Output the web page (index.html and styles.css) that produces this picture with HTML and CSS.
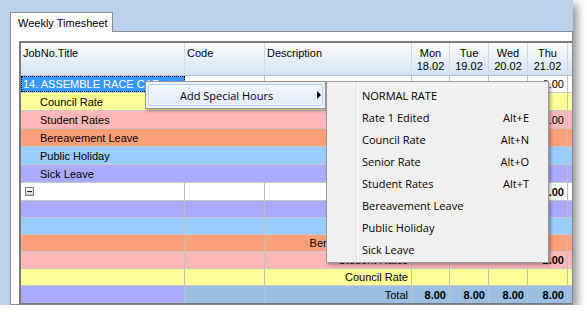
FILE: index.html
```html
<!DOCTYPE html>
<html lang="en">
<head>
  <meta charset="UTF-8" />
  <title>Weekly Timesheet</title>
  <link rel="stylesheet" href="styles.css">
</head>
<body>

  <div class="window">
    <div class="tab">Weekly Timesheet</div>

    <div class="panel">
      <div class="grid">
        <div class="row head">
          <div class="cell">JobNo.Title</div>
          <div class="cell">Code</div>
          <div class="cell">Description</div>
          <div class="cell day">Mon<br>18.02</div>
          <div class="cell day">Tue<br>19.02</div>
          <div class="cell day">Wed<br>20.02</div>
          <div class="cell day">Thu<br>21.02</div>
          <div class="cell"></div>
        </div>

        <div class="row job">
          <div class="cell selected">14. ASSEMBLE RACE CAR</div>
          <div class="cell"></div>
          <div class="cell"></div>
          <div class="cell num"></div>
          <div class="cell num"></div>
          <div class="cell num"></div>
          <div class="cell num">6.00</div>
          <div class="cell"></div>
        </div>

        <div class="row rate yellow">
          <div class="cell label">Council Rate</div>
          <div class="cell num"></div>
          <div class="cell num"></div>
          <div class="cell num"></div>
          <div class="cell num"></div>
          <div class="cell"></div>
        </div>
        <div class="row rate pink">
          <div class="cell label">Student Rates</div>
          <div class="cell num"></div>
          <div class="cell num"></div>
          <div class="cell num"></div>
          <div class="cell num">2.00</div>
          <div class="cell"></div>
        </div>
        <div class="row rate orange">
          <div class="cell label">Bereavement Leave</div>
          <div class="cell num"></div>
          <div class="cell num"></div>
          <div class="cell num"></div>
          <div class="cell num"></div>
          <div class="cell"></div>
        </div>
        <div class="row rate blue">
          <div class="cell label">Public Holiday</div>
          <div class="cell num"></div>
          <div class="cell num"></div>
          <div class="cell num"></div>
          <div class="cell num"></div>
          <div class="cell"></div>
        </div>
        <div class="row rate lavender">
          <div class="cell label">Sick Leave</div>
          <div class="cell num"></div>
          <div class="cell num"></div>
          <div class="cell num"></div>
          <div class="cell num"></div>
          <div class="cell"></div>
        </div>

        <div class="row rate">
          <div class="cell"><span class="collapse"></span></div>
          <div class="cell"></div>
          <div class="cell"></div>
          <div class="cell num"></div>
          <div class="cell num"></div>
          <div class="cell num"></div>
          <div class="cell num bold">8.00</div>
          <div class="cell"></div>
        </div>

        <div class="row sum lavender">
          <div class="cell"></div>
          <div class="cell"></div>
          <div class="cell num"></div>
          <div class="cell num"></div>
          <div class="cell num"></div>
          <div class="cell num"></div>
          <div class="cell num"></div>
          <div class="cell"></div>
        </div>
        <div class="row sum blue">
          <div class="cell"></div>
          <div class="cell"></div>
          <div class="cell num"></div>
          <div class="cell num"></div>
          <div class="cell num"></div>
          <div class="cell num"></div>
          <div class="cell num"></div>
          <div class="cell"></div>
        </div>
        <div class="row sum orange">
          <div class="cell"></div>
          <div class="cell"></div>
          <div class="cell num">Bereavement Leave</div>
          <div class="cell num"></div>
          <div class="cell num"></div>
          <div class="cell num"></div>
          <div class="cell num"></div>
          <div class="cell"></div>
        </div>
        <div class="row sum pink">
          <div class="cell"></div>
          <div class="cell"></div>
          <div class="cell num">Student Rates</div>
          <div class="cell num"></div>
          <div class="cell num"></div>
          <div class="cell num"></div>
          <div class="cell num bold">2.00</div>
          <div class="cell"></div>
        </div>
        <div class="row sum yellow">
          <div class="cell"></div>
          <div class="cell"></div>
          <div class="cell num">Council Rate</div>
          <div class="cell num"></div>
          <div class="cell num"></div>
          <div class="cell num"></div>
          <div class="cell num"></div>
          <div class="cell"></div>
        </div>
        <div class="row total">
          <div class="cell lavender"></div>
          <div class="cell"></div>
          <div class="cell num">Total</div>
          <div class="cell num bold">8.00</div>
          <div class="cell num bold">8.00</div>
          <div class="cell num bold">8.00</div>
          <div class="cell num bold">8.00</div>
          <div class="cell"></div>
        </div>
      </div>
    </div>

    <!-- context menu -->
    <div class="menu main-menu">
      <div class="item active">
        <span>Add Special Hours</span>
        <span class="arrow"></span>
      </div>
    </div>

    <div class="menu sub-menu">
      <div class="item"><span>NORMAL RATE</span></div>
      <div class="item"><span>Rate 1 Edited</span><span>Alt+E</span></div>
      <div class="item"><span>Council Rate</span><span>Alt+N</span></div>
      <div class="item"><span>Senior Rate</span><span>Alt+O</span></div>
      <div class="item"><span>Student Rates</span><span>Alt+T</span></div>
      <div class="item"><span>Bereavement Leave</span></div>
      <div class="item"><span>Public Holiday</span></div>
      <div class="item"><span>Sick Leave</span></div>
    </div>
  </div>

</body>
</html>
```

FILE: styles.css
```css
body {
  margin: 0;
  background-color: #fff;
  font-family: "Liberation Sans", Arial, sans-serif;
  font-size: 11px;
  color: #000;
}

.window {
  position: relative;
  box-sizing: border-box;
  width: 573px;
  height: 305px;
  padding-top: 12px;
  background-color: #b9d1ea;
  box-shadow: 4px 4px 9px rgba(0,0,0,0.45);
}

.tab {
  position: relative;
  z-index: 1;
  box-sizing: border-box;
  width: 103px;
  height: 20px;
  margin: 0 0 -1px 10px;
  padding: 3px 0 0 7px;
  line-height: 14px;
  background-color: #fff;
  border: 1px solid #898c95;
  border-bottom: none;
}

.panel {
  box-sizing: border-box;
  width: 563px;
  height: 274px;
  margin-left: 10px;
  padding: 9px 0 0 8px;
  background-color: #fff;
  border: 1px solid #898c95;
}

.grid {
  box-sizing: border-box;
  width: 553px;
  overflow: hidden;
  border-top: 2px solid #7a7a7a;
  border-left: 2px solid #7a7a7a;
  border-bottom: 1px solid #7a7a7a;
}

.row {
  display: grid;
  grid-template-columns: 164px 80px 147px 38px 39px 39px 40px 4px;
  box-sizing: border-box;
  border-bottom: 1px solid #c8c8c8;
  background-color: #fff;
}

.cell {
  display: flex;
  align-items: center;
  box-sizing: border-box;
  min-width: 0;
  padding: 0 2px;
  overflow: hidden;
  white-space: nowrap;
  border-right: 1px solid #c0c0c0;
}

.cell:last-child {
  border-right: none;
}

.num {
  justify-content: flex-end;
  padding-right: 3px;
}

.bold {
  font-weight: bold;
}

.head {
  height: 33px;
  background: linear-gradient(#fcfdfe, #d3e2f2);
  border-bottom: 1px solid #b7c4d2;
}

.head .cell {
  align-items: flex-start;
  padding-top: 4px;
  line-height: 13px;
  border-right-color: #d0d9e3;
}

.head .day {
  justify-content: center;
  text-align: center;
}

.job {
  height: 17px;
}

.rate {
  height: 18px;
}

.sum,
.total {
  height: 17px;
}

.total {
  border-bottom: none;
  background-color: #9bbfe2;
}

.label {
  grid-column: span 3;
  padding-left: 19px;
}

.selected {
  padding-left: 1px;
  color: #fff;
  background-color: #3399ff;
  border: 1px dotted #000;
}

.collapse {
  position: relative;
  box-sizing: border-box;
  width: 9px;
  height: 9px;
  margin-left: 2px;
  border: 1px solid #7f7f7f;
  background: linear-gradient(#fff, #c9c9c9);
}

.collapse::after {
  content: "";
  position: absolute;
  left: 1px;
  top: 3px;
  width: 5px;
  height: 1px;
  background-color: #222;
}

.yellow { background-color: #ffff99; }
.pink { background-color: #ffb7b7; }
.orange { background-color: #ffa07a; }
.blue { background-color: #99ccff; }
.lavender { background-color: #aaaaff; }

/* context menu */

.menu {
  position: absolute;
  top: 81px;
  box-sizing: border-box;
  padding: 2px;
  font-family: "Open Sans", "Noto Sans", sans-serif;
  font-size: 11px;
  border: 1px solid #979797;
  background: linear-gradient(to right, #f0f0f0 29px, #e2e3e3 29px, #e2e3e3 30px, #fff 30px, #fff 31px, #f0f0f0 31px);
  box-shadow: 2px 2px 3px rgba(0,0,0,0.3);
}

.main-menu {
  left: 145px;
  width: 181px;
}

.sub-menu {
  left: 326px;
  width: 223px;
}

.item {
  display: flex;
  justify-content: space-between;
  align-items: center;
  box-sizing: border-box;
  height: 22px;
  padding: 0 16px 0 32px;
  border: 1px solid transparent;
  border-radius: 3px;
}

.main-menu .item {
  padding: 0 1px 0 31px;
}

.item.active {
  border-color: #aecff7;
  background: linear-gradient(#f4f8fd, #e1ebf8);
  box-shadow: inset 0 0 0 1px rgba(255,255,255,0.6);
}

.arrow {
  width: 0;
  height: 0;
  border-left: 4px solid #000;
  border-top: 4px solid transparent;
  border-bottom: 4px solid transparent;
}
```
